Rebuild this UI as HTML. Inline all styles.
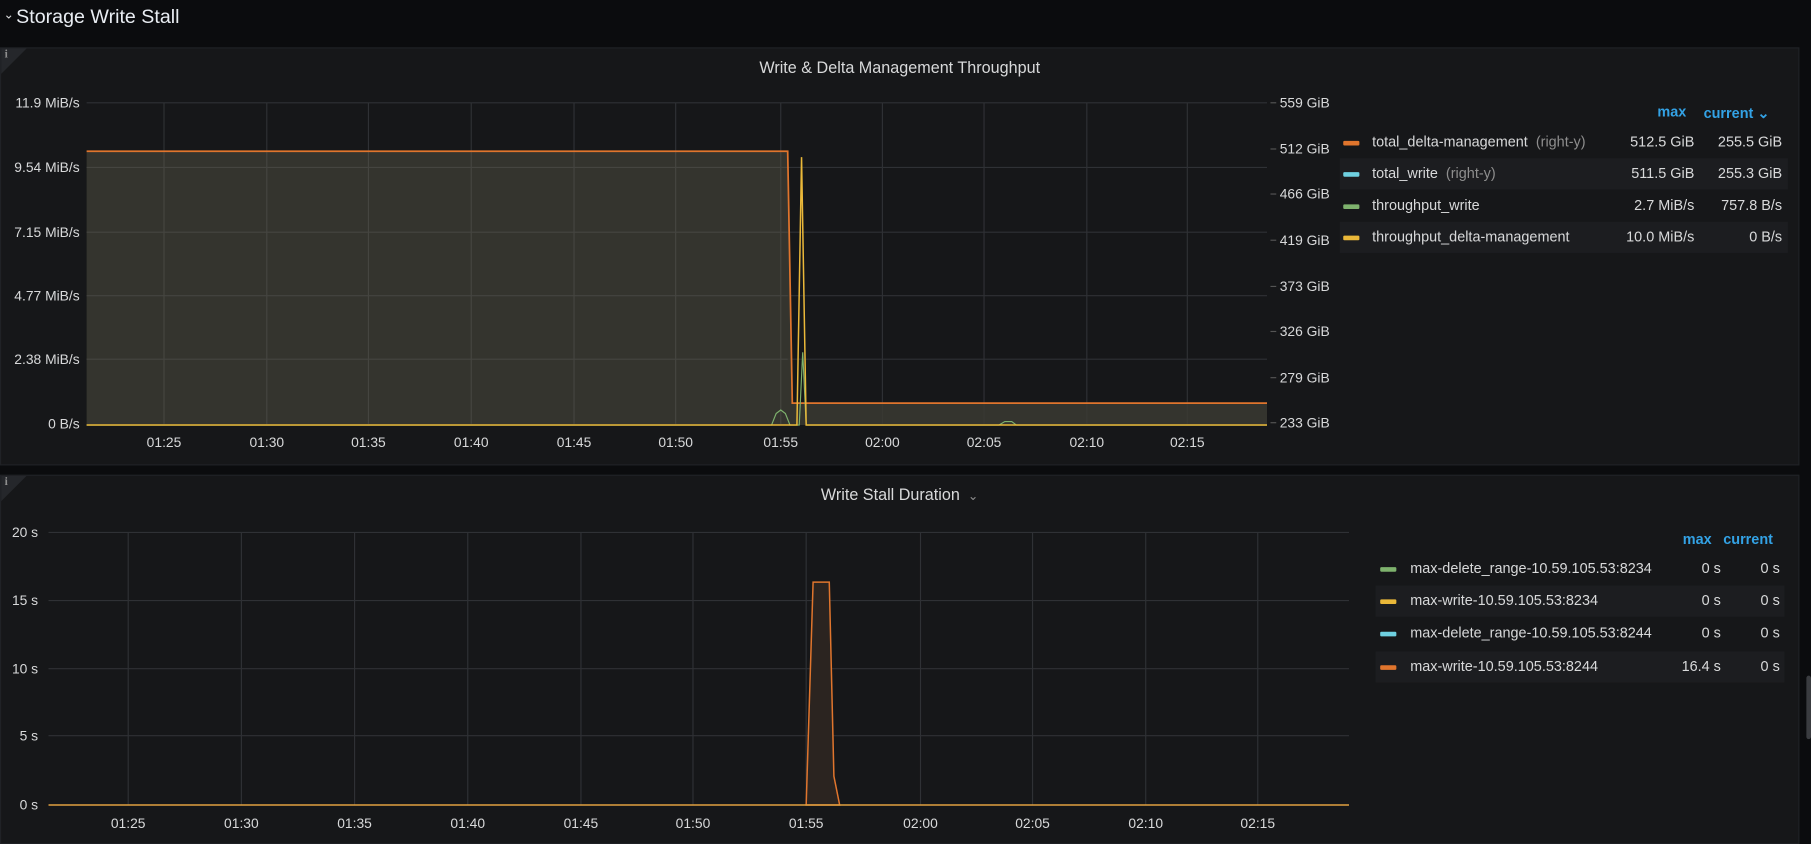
<!DOCTYPE html>
<html><head><meta charset="utf-8"><style>
html,body{margin:0;padding:0;background:#0b0c0e;overflow:hidden;width:1811px;height:830px;}
#w{position:absolute;left:0;top:0;width:1568px;height:719px;transform:scale(1.15497);transform-origin:0 0;font-family:"Liberation Sans",sans-serif;color:#d8d9da;}
.t{position:absolute;white-space:nowrap;}
.panel{position:absolute;left:0;width:1558px;background:#161719;border:1px solid #202226;box-sizing:border-box;}
.ptitle{position:absolute;width:100%;text-align:center;font-size:14px;color:#d8d9da;}
.info{position:absolute;left:0;top:0;width:0;height:0;border-top:22px solid #25272b;border-right:22px solid transparent;}
.info span{position:absolute;left:3px;top:-22px;font-size:10px;color:#8e8e8e;font-weight:bold;font-family:"Liberation Serif",serif;}
.lg{position:absolute;font-size:12.5px;}
.row{position:absolute;height:27px;line-height:27px;}
.sw{position:absolute;width:14px;height:4px;top:12px;border-radius:1px;}
.num{position:absolute;text-align:right;}
.hd{position:absolute;color:#33a2e5;font-size:12.5px;font-weight:bold;}
svg text{font-family:"Liberation Sans",sans-serif;font-size:12px;fill:#d8d9da;}
</style></head><body><div id="w">
<div class="t" style="left:3px;top:6px;font-size:11px;color:#d8d9da">&#8964;</div>
<div class="t" style="left:14px;top:5px;font-size:17px;color:#e9edf2">Storage Write Stall</div>

<div class="panel" style="top:41px;height:362px;">
<div class="info"><span>i</span></div>
<div class="ptitle" style="top:8px;">Write &amp; Delta Management Throughput</div>
</div>
<svg style="position:absolute;left:0;top:0" width="1568" height="719">
<g stroke="#2f3135" stroke-width="1">
<line x1="75" y1="89" x2="1097" y2="89"/><line x1="75" y1="145" x2="1097" y2="145"/><line x1="75" y1="201" x2="1097" y2="201"/><line x1="75" y1="256" x2="1097" y2="256"/><line x1="75" y1="311" x2="1097" y2="311"/>
<line x1="142" y1="89" x2="142" y2="367"/><line x1="231" y1="89" x2="231" y2="367"/><line x1="319" y1="89" x2="319" y2="367"/><line x1="408" y1="89" x2="408" y2="367"/><line x1="497" y1="89" x2="497" y2="367"/><line x1="585" y1="89" x2="585" y2="367"/><line x1="676" y1="89" x2="676" y2="367"/><line x1="764" y1="89" x2="764" y2="367"/><line x1="852" y1="89" x2="852" y2="367"/><line x1="941" y1="89" x2="941" y2="367"/><line x1="1028" y1="89" x2="1028" y2="367"/>
</g>
<polygon points="75,131 682,131 686,349 1097,349 1097,368 75,368" fill="#3a3a33" fill-opacity="0.85"/>
<g stroke="#454540" stroke-width="1"><line x1="75" y1="145" x2="682" y2="145"/><line x1="75" y1="201" x2="682" y2="201"/><line x1="75" y1="256" x2="682" y2="256"/><line x1="75" y1="311" x2="682" y2="311"/><line x1="142" y1="131" x2="142" y2="367"/><line x1="231" y1="131" x2="231" y2="367"/><line x1="319" y1="131" x2="319" y2="367"/><line x1="408" y1="131" x2="408" y2="367"/><line x1="497" y1="131" x2="497" y2="367"/><line x1="585" y1="131" x2="585" y2="367"/><line x1="676" y1="131" x2="676" y2="367"/></g>
<polyline points="75,131 682,131 686,349 1097,349" fill="none" stroke="#e0752d" stroke-width="1.5"/>
<polyline points="75,368 668,368 672,358 676,355 680,358 684,368 692,368 695,305 698,368 865,368 870,365 876,365 880,368 1097,368" fill="none" stroke="#7eb26d" stroke-width="1"/>
<polyline points="75,368 690,368 694,136 698,368 1097,368" fill="none" stroke="#eab839" stroke-width="1.3"/>
<g text-anchor="end"><text x="69" y="93">11.9 MiB/s</text><text x="69" y="149">9.54 MiB/s</text><text x="69" y="205">7.15 MiB/s</text><text x="69" y="260">4.77 MiB/s</text><text x="69" y="315">2.38 MiB/s</text><text x="69" y="371">0 B/s</text></g>
<g><text x="1108" y="93">559 GiB</text><text x="1108" y="133">512 GiB</text><text x="1108" y="172">466 GiB</text><text x="1108" y="212">419 GiB</text><text x="1108" y="252">373 GiB</text><text x="1108" y="291">326 GiB</text><text x="1108" y="331">279 GiB</text><text x="1108" y="370">233 GiB</text></g>
<g stroke="#555" ><line x1="1100" y1="89" x2="1105" y2="89"/><line x1="1100" y1="129" x2="1105" y2="129"/><line x1="1100" y1="168" x2="1105" y2="168"/><line x1="1100" y1="208" x2="1105" y2="208"/><line x1="1100" y1="248" x2="1105" y2="248"/><line x1="1100" y1="287" x2="1105" y2="287"/><line x1="1100" y1="327" x2="1105" y2="327"/><line x1="1100" y1="366" x2="1105" y2="366"/></g>
<g text-anchor="middle"><text x="142" y="387">01:25</text><text x="231" y="387">01:30</text><text x="319" y="387">01:35</text><text x="408" y="387">01:40</text><text x="497" y="387">01:45</text><text x="585" y="387">01:50</text><text x="676" y="387">01:55</text><text x="764" y="387">02:00</text><text x="852" y="387">02:05</text><text x="941" y="387">02:10</text><text x="1028" y="387">02:15</text></g>
</svg>
<div class="hd" style="left:1435px;top:90px">max</div>
<div class="hd" style="left:1475px;top:90px">current &#8964;</div>
<div class="lg" style="left:1160px;top:110px;width:388px;">
<div class="row" style="top:0;width:388px;"><div class="sw" style="left:3px;background:#e0752d"></div><span style="position:absolute;left:28px">total_delta-management <span style="color:#8e8e8e">&nbsp;(right-y)</span></span><div class="num" style="right:81px">512.5 GiB</div><div class="num" style="right:5px">255.5 GiB</div></div>
<div class="row" style="top:27px;width:388px;background:#1c1d20"><div class="sw" style="left:3px;background:#6ed0e0"></div><span style="position:absolute;left:28px">total_write <span style="color:#8e8e8e">&nbsp;(right-y)</span></span><div class="num" style="right:81px">511.5 GiB</div><div class="num" style="right:5px">255.3 GiB</div></div>
<div class="row" style="top:55px;width:388px;"><div class="sw" style="left:3px;background:#7eb26d"></div><span style="position:absolute;left:28px">throughput_write</span><div class="num" style="right:81px">2.7 MiB/s</div><div class="num" style="right:5px">757.8 B/s</div></div>
<div class="row" style="top:82px;width:388px;background:#1c1d20"><div class="sw" style="left:3px;background:#eab839"></div><span style="position:absolute;left:28px">throughput_delta-management</span><div class="num" style="right:81px">10.0 MiB/s</div><div class="num" style="right:5px">0 B/s</div></div>
</div>

<div class="panel" style="top:411px;height:320px;">
<div class="info"><span>i</span></div>
<div class="ptitle" style="top:8px;">Write Stall Duration <span style="color:#8e8e8e;font-size:11px">&nbsp;&#8964;</span></div>
</div>
<svg style="position:absolute;left:0;top:0" width="1568" height="719">
<g stroke="#2f3135" stroke-width="1">
<line x1="42" y1="461" x2="1168" y2="461"/><line x1="42" y1="520" x2="1168" y2="520"/><line x1="42" y1="579" x2="1168" y2="579"/><line x1="42" y1="637" x2="1168" y2="637"/>
<line x1="111" y1="461" x2="111" y2="697"/><line x1="209" y1="461" x2="209" y2="697"/><line x1="307" y1="461" x2="307" y2="697"/><line x1="405" y1="461" x2="405" y2="697"/><line x1="503" y1="461" x2="503" y2="697"/><line x1="600" y1="461" x2="600" y2="697"/><line x1="698" y1="461" x2="698" y2="697"/><line x1="797" y1="461" x2="797" y2="697"/><line x1="894" y1="461" x2="894" y2="697"/><line x1="992" y1="461" x2="992" y2="697"/><line x1="1089" y1="461" x2="1089" y2="697"/>
</g>
<polygon points="698,697 704,504 718,504 722,672 727,697" fill="#2b2420" stroke="#e0752d" stroke-width="1.3"/>
<line x1="42" y1="697" x2="1168" y2="697" stroke="#e0a040" stroke-width="1.3"/>
<g text-anchor="end"><text x="33" y="465">20 s</text><text x="33" y="524">15 s</text><text x="33" y="583">10 s</text><text x="33" y="641">5 s</text><text x="33" y="701">0 s</text></g>
<g text-anchor="middle"><text x="111" y="717">01:25</text><text x="209" y="717">01:30</text><text x="307" y="717">01:35</text><text x="405" y="717">01:40</text><text x="503" y="717">01:45</text><text x="600" y="717">01:50</text><text x="698" y="717">01:55</text><text x="797" y="717">02:00</text><text x="894" y="717">02:05</text><text x="992" y="717">02:10</text><text x="1089" y="717">02:15</text></g>
</svg>
<div class="hd" style="left:1457px;top:460px">max</div>
<div class="hd" style="left:1492px;top:460px">current</div>
<div class="lg" style="left:1191px;top:479px;width:354px;">
<div class="row" style="top:0;width:354px;"><div class="sw" style="left:4px;background:#7eb26d"></div><span style="position:absolute;left:30px">max-delete_range-10.59.105.53:8234</span><div class="num" style="right:55px">0 s</div><div class="num" style="right:4px">0 s</div></div>
<div class="row" style="top:28px;width:354px;background:#1c1d20"><div class="sw" style="left:4px;background:#eab839"></div><span style="position:absolute;left:30px">max-write-10.59.105.53:8234</span><div class="num" style="right:55px">0 s</div><div class="num" style="right:4px">0 s</div></div>
<div class="row" style="top:56px;width:354px;"><div class="sw" style="left:4px;background:#6ed0e0"></div><span style="position:absolute;left:30px">max-delete_range-10.59.105.53:8244</span><div class="num" style="right:55px">0 s</div><div class="num" style="right:4px">0 s</div></div>
<div class="row" style="top:85px;width:354px;background:#1c1d20"><div class="sw" style="left:4px;background:#e0752d"></div><span style="position:absolute;left:30px">max-write-10.59.105.53:8244</span><div class="num" style="right:55px">16.4 s</div><div class="num" style="right:4px">0 s</div></div>
</div>
<div style="position:absolute;left:1564px;top:585px;width:4px;height:55px;background:#3a3c40;border-radius:2px"></div>
</div></body></html>
